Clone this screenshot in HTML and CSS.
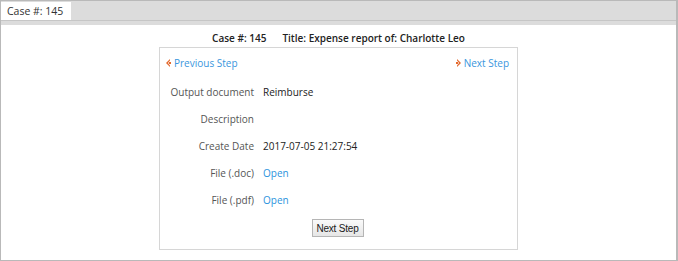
FILE: index.html
```html
<!DOCTYPE html>
<html>
<head>
<meta charset="utf-8">
<link rel="stylesheet" href="styles.css">
</head>
<body>
<div class="frame">
  <div class="tabbar">
    <div class="tab">Case #: 145</div>
  </div>
  <div class="strip"></div>
  <div class="content">
    <div class="title"><span class="case">Case #: 145</span><span>Title: Expense report of: Charlotte Leo</span></div>
    <div class="box">
      <div class="nav">
        <a class="navlink" href="#"><svg class="ico" width="5" height="8" viewBox="0 0 5 8"><path d="M4 0 L0 4 L4 8 L4 6.5 L2 4 L4 1.5 Z" fill="#e46a2e"/><rect x="3" y="3" width="2" height="2" fill="#e46a2e"/></svg>Previous Step</a>
        <a class="navlink" href="#"><svg class="ico" width="5" height="8" viewBox="0 0 5 8"><path d="M1 0 L5 4 L1 8 L1 6.5 L3 4 L1 1.5 Z" fill="#e46a2e"/><rect x="0" y="3" width="2" height="2" fill="#e46a2e"/></svg>Next Step</a>
      </div>
      <div class="rows">
        <div class="label">Output document</div><div class="value">Reimburse</div>
        <div class="label">Description</div><div class="value"></div>
        <div class="label">Create Date</div><div class="value">2017-07-05 21:27:54</div>
        <div class="label">File (.doc)</div><div class="value"><a class="link" href="#">Open</a></div>
        <div class="label">File (.pdf)</div><div class="value"><a class="link" href="#">Open</a></div>
      </div>
      <div class="actions"><button class="btn">Next Step</button></div>
    </div>
  </div>
</div>
</body>
</html>
```
FILE: styles.css
```css
html, body {
  margin: 0;
  padding: 0;
  background: #fff;
}
body {
  font-family: "Open Sans", "DejaVu Sans", sans-serif;
  font-size: 10px;
  color: #222;
}
.frame {
  width: 678px;
  height: 261px;
  box-sizing: border-box;
  border: 1px solid #b9b9b9;
  border-right-width: 2px;
  display: flex;
  flex-direction: column;
}
.tabbar {
  height: 19px;
  background: #dcdcdc;
  border-bottom: 1px solid #c6c6c6;
  display: flex;
  align-items: flex-end;
}
.tab {
  height: 18px;
  width: 70px;
  background: #fff;
  box-sizing: border-box;
  padding-left: 6px;
  line-height: 18px;
  font-size: 10.5px;
  color: #333;
}
.strip {
  height: 4px;
  background: #dcdcdc;
}
.content {
  flex: 1;
  display: flex;
  flex-direction: column;
  align-items: center;
}
.title {
  margin-top: 5px;
  line-height: 16px;
  height: 16px;
  font-weight: 600;
  color: #222;
}
.case {
  margin-right: 16px;
}
.box {
  margin-top: 1px;
  width: 359px;
  box-sizing: border-box;
  border: 1px solid #d6d6d6;
  padding: 7px 8px 12px 6px;
  display: flex;
  flex-direction: column;
}
.nav {
  display: flex;
  justify-content: space-between;
  line-height: 16px;
  height: 16px;
}
.navlink {
  color: #3a96dd;
  text-decoration: none;
  display: flex;
  align-items: center;
  gap: 3px;
}
.ico {
  display: block;
}
.rows {
  margin-top: 7px;
  display: grid;
  grid-template-columns: 88px 1fr;
  grid-auto-rows: 27px;
  column-gap: 9px;
  align-items: center;
}
.label {
  text-align: right;
  white-space: nowrap;
  color: #555;
}
.value {
  color: #222;
}
.link {
  color: #2b93dd;
  text-decoration: none;
}
.actions {
  margin-top: 6px;
  display: flex;
  justify-content: center;
}
.btn {
  height: 18px;
  width: 52px;
  padding: 0;
  border: 1px solid #b5b5b5;
  background: linear-gradient(#fafafa, #e6e6e6);
  font-family: "Liberation Sans", Arial, sans-serif;
  font-size: 10px;
  color: #1a1a1a;
  letter-spacing: -0.2px;
}
```
